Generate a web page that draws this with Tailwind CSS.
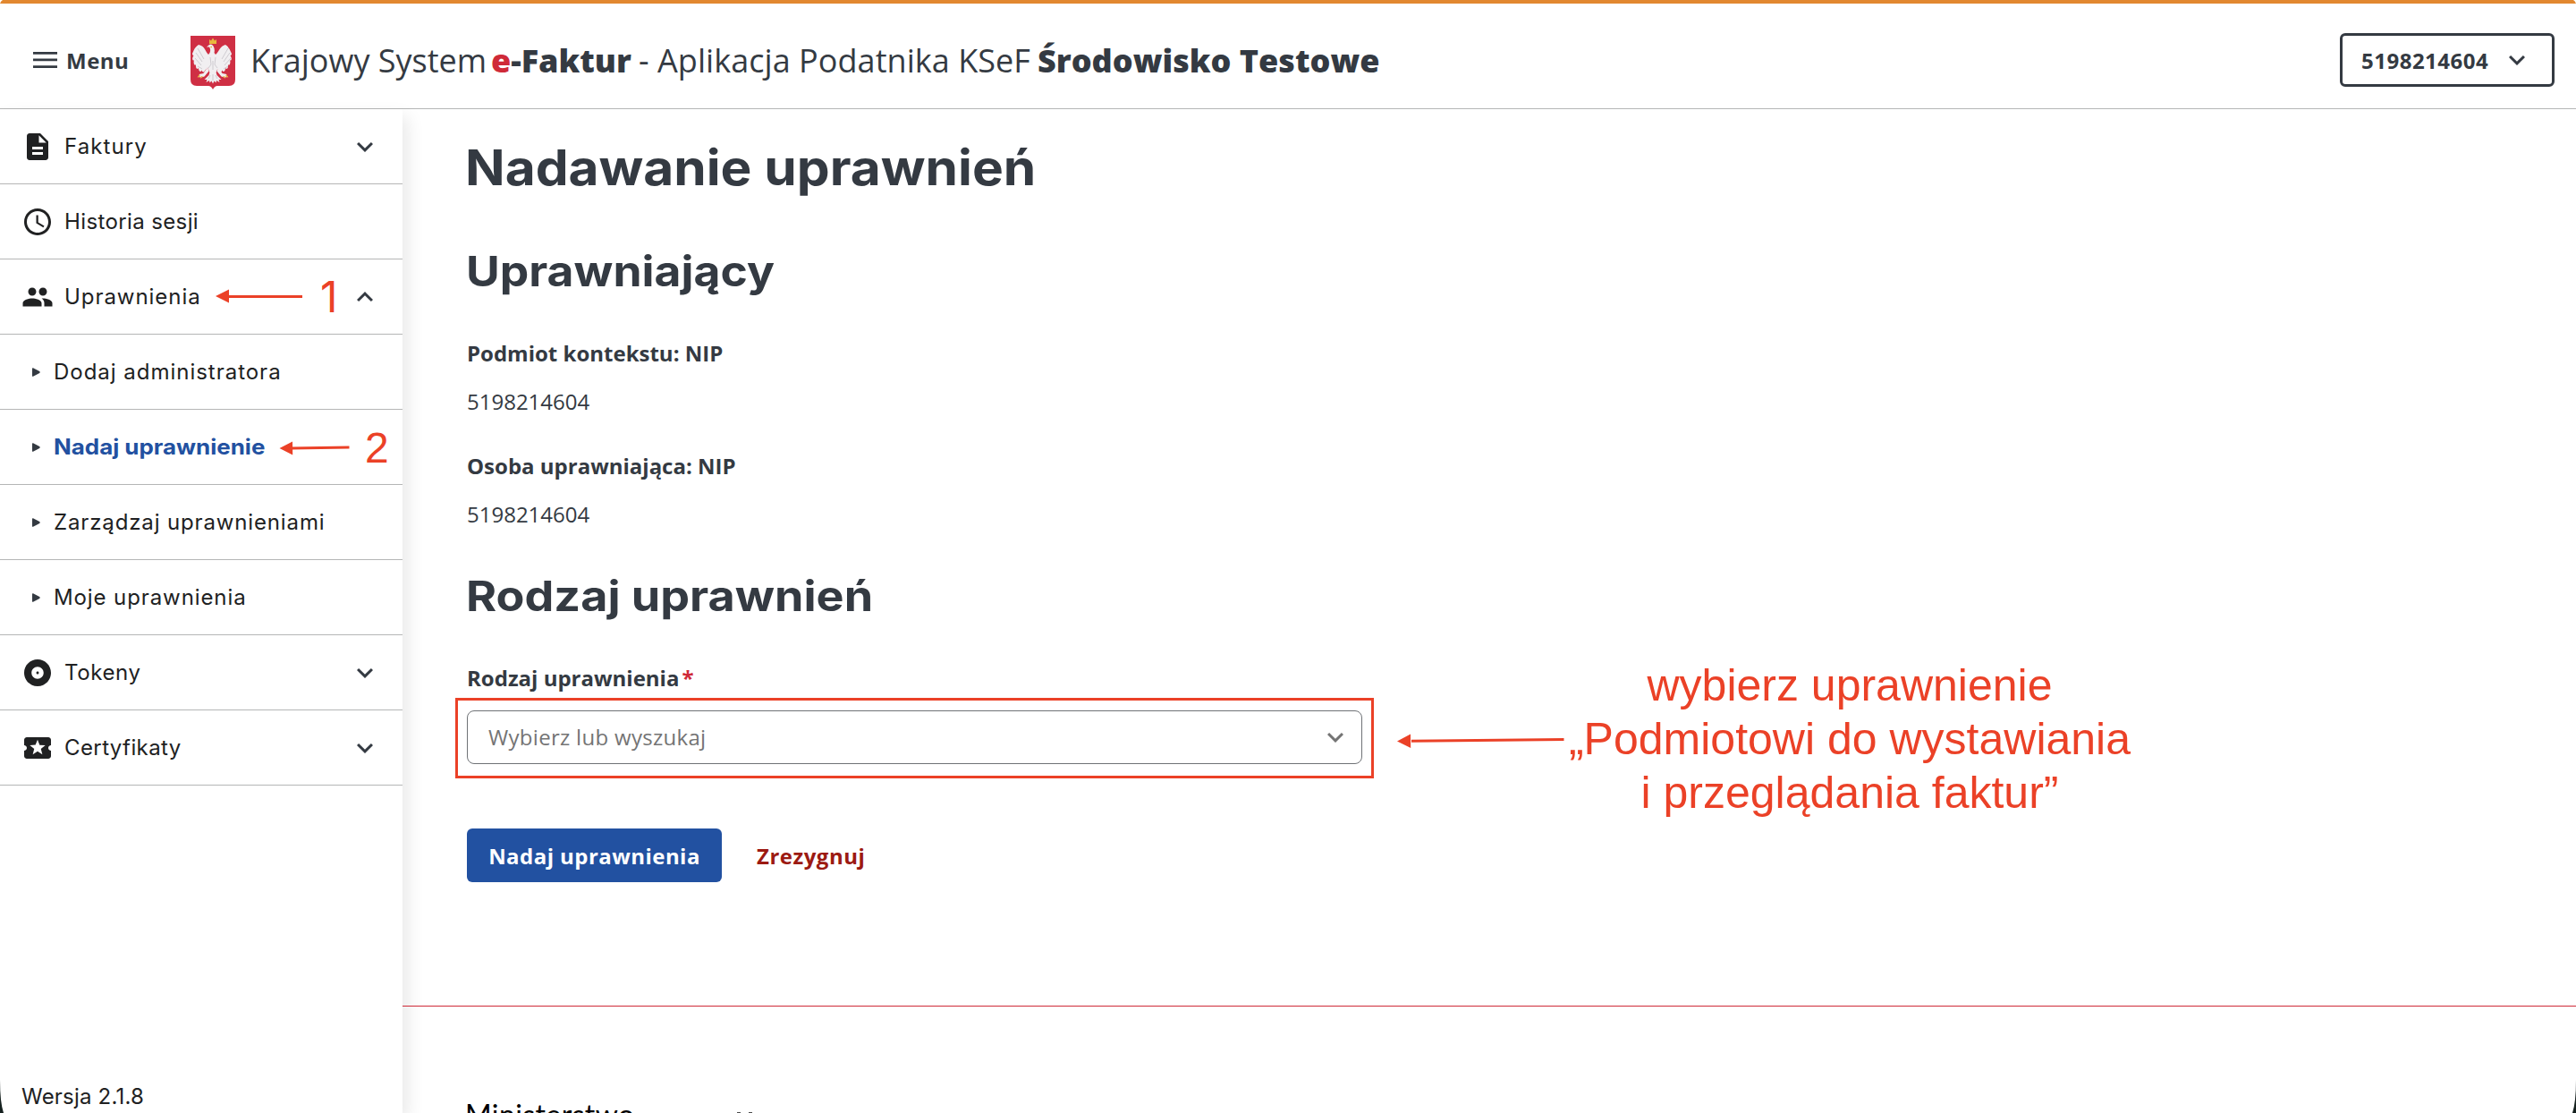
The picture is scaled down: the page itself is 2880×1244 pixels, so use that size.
<!DOCTYPE html>
<html lang="pl">
<head>
  <meta charset="UTF-8">
  <title>Krajowy System e-Faktur - Aplikacja Podatnika KSeF</title>
  <script src="https://cdn.jsdelivr.net/npm/@tailwindcss/browser@4"></script>
</head>

<body class="relative flex flex-col h-[1244px] overflow-hidden bg-white text-[#343a42] text-2xl font-['Open_Sans',sans-serif]">

  <svg class="hidden">
    <symbol id="chevron-down" viewBox="0 0 24 24"><path d="M16.59 8.59 12 13.17 7.41 8.59 6 10l6 6 6-6z"/></symbol>
    <symbol id="chevron-up" viewBox="0 0 24 24"><path d="m12 8-6 6 1.41 1.41L12 10.83l4.59 4.58L18 14z"/></symbol>
    <symbol id="bullet" viewBox="0 0 9 10"><path d="M0 .8Q0 0 1 .2L8.2 4q1 1 0 2L1 9.8Q0 10 0 9.2z"/></symbol>
  </svg>

  <!-- Nagłówek -->
  <header class="flex items-center shrink-0 h-[122px] pt-[9px] pl-[37px] pr-6 border-t-4 border-t-[#e28830] border-b border-b-[#b5b6b6]">
    <button class="flex items-center gap-[10px] w-[176px] font-bold">
      <svg class="w-[27px] h-[18px]" viewBox="0 0 27 18" fill="#343a42"><path d="M0 0h27v2.7H0zM0 7.6h27v2.7H0zM0 15.2h27V18H0z"/></svg>
      <span class="pt-px tracking-[0.5px]">Menu</span>
    </button>

    <!-- Godło -->
    <svg class="w-[50px] h-[60px] mt-1.5 shrink-0" viewBox="0 0 50 60">
      <path fill="#cf2f44" d="M0 0h50v49q0 7-7 7h-13q-3 0-5 4q-2-4-5-4H7q-7 0-7-7z"/>
      <g fill="#f1eff1">
        <path d="M9 10q-4 2-7 10q0 2 1.500 2q-2 3-1 5q1 1 1.500 0q-1 4 .5 5.500q1 .5 1.500-.5q-.5 4 1.500 5q1 0 1.500-1q0 3.500 2 4q1 0 1.300-1.500q1 2.500 2.700 2q2-3 4.500-5.500h9q2.500 2.500 4.500 5.500q1.700.5 2.700-2q.3 1.500 1.300 1.500q2-.5 2-4q.5 1 1.500 1q2-1 1.500-5q.5 1 1.500.5q1.500-1.500.5-5.500q.5 1 1.500 0q1-2-1-5q1.500 0 1.500-2q-3-8-7-10q-4 1-6.500 5q-3 5-4.500 6l-1.500-2q1-4-1-7.500q-2-3-4.500-1.500l-3 2.500l3 0q2 3 .5 6.500l-1.500 2q-2-2-4-6q-2-4-7-5z"/>
        <path d="M19 24h12l1.500 8l-4 9h-7l-4-9z"/>
        <path d="M19 35l-4.500 7l-5 1l1 1.500l-2.500 1.500l4 .500l3.500-1l5-6zM31 35l4.500 7l5 1l-1 1.500l2.500 1.500l-4 .500l-3.500-1l-5-6z"/>
        <path d="M22 39h6l1.500 5l5 5l-3 0l1 3l-3.500-2l-.5 2.500l-2-2l-1.500 3l-1.500-3l-2 2l-.5-2.500l-3.500 2l1-3l-3 0l5-5z"/>
      </g>
      <path fill="none" stroke="#c5c1c8" stroke-width=".8" d="M6 19l7 10M5 25l7 8M8 14l7 12M8 34l5 3M44 19l-7 10M45 25l-7 8M42 14l-7 12M42 34l-5 3M22 24l1 8l-3 4M28 24l-1 8l3 4M25 28v10M22 44l-2 4M28 44l2 4M25 43v7"/>
      <path fill="#e8b93e" d="M21 4l2 1.500L25 2.500l2 3l2-1.500v5h-8zM21.500 12.500l2.500-1v2zM10 43l-2.500 3.500l3-.5zM40 43l2.500 3.500l-3-.5zM12 45l-1 3l3-2.500zM38 45l1 3l-3-2.500z"/>
    </svg>

    <h1 class="flex ml-[17px] pt-0.5 text-4xl leading-[50px] whitespace-nowrap">
      <span class="w-[269px]">Krajowy System</span>
      <span class="w-[165px] font-extrabold"><span class="text-[#cf2a38]">e</span>-Faktur</span>
      <span class="w-[446px] tracking-[0.05px]">- Aplikacja Podatnika KSeF</span>
      <span class="font-extrabold">Środowisko Testowe</span>
    </h1>

    <button class="flex items-center justify-between ml-auto w-[240px] h-[60px] pl-[21px] pr-[21px] border-3 border-[#343a42] rounded-md font-bold tracking-[0.5px]">
      <span class="pt-px">5198214604</span>
      <svg class="size-9" fill="#343a42"><use href="#chevron-down"/></svg>
    </button>
  </header>

  <div class="flex flex-1">

    <!-- Menu boczne -->
    <aside class="flex flex-col w-[450px] shrink-0 text-[#202122] font-['Inter',sans-serif] shadow-[6px_8px_18px_rgba(0,0,0,0.09)]">
      <div class="flex items-center gap-3 h-[84px] px-6 border-b border-[#b5b6b6]">
        <svg class="size-9" viewBox="0 0 24 24" fill="#202122"><path d="M14 2H6c-1.100 0-1.990.9-1.990 2L4 20c0 1.100.89 2 1.990 2H18c1.100 0 2-.9 2-2V8zm2 16H8v-2h8zm0-4H8v-2h8zm-3-5V3.500L18.500 9z"/></svg>
        <span class="tracking-[1.1px]">Faktury</span>
        <svg class="size-9 ml-auto" fill="#343a42"><use href="#chevron-down"/></svg>
      </div>
      <div class="flex items-center gap-3 h-[84px] px-6 border-b border-[#b5b6b6]">
        <svg class="size-9" viewBox="0 0 24 24" fill="#202122"><path d="M11.990 2C6.470 2 2 6.480 2 12s4.470 10 9.990 10C17.520 22 22 17.520 22 12S17.520 2 11.990 2M12 20c-4.420 0-8-3.580-8-8s3.580-8 8-8 8 3.580 8 8-3.580 8-8 8m.5-13H11v6l5.250 3.150.75-1.230-4.500-2.670z"/></svg>
        <span class="tracking-[0.38px]">Historia sesji</span>
      </div>
      <div class="flex items-center gap-3 h-[84px] px-6 border-b border-[#b5b6b6]">
        <svg class="size-9" viewBox="0 0 24 24" fill="#202122"><path d="M16 11c1.660 0 2.990-1.340 2.990-3S17.660 5 16 5s-3 1.340-3 3 1.340 3 3 3m-8 0c1.660 0 2.990-1.340 2.990-3S9.660 5 8 5 5 6.340 5 8s1.340 3 3 3m0 2c-2.330 0-7 1.170-7 3.500V19h14v-2.500c0-2.330-4.670-3.500-7-3.500m8 0c-.29 0-.62.02-.97.05 1.160.84 1.970 1.970 1.970 3.450V19h6v-2.500c0-2.330-4.670-3.500-7-3.500"/></svg>
        <span class="tracking-[0.95px]">Uprawnienia</span>
        <svg class="size-9 ml-auto" fill="#343a42"><use href="#chevron-up"/></svg>
      </div>
      <div class="flex items-center gap-[15px] h-[84px] pl-9 border-b border-[#b5b6b6]">
        <svg class="w-[9px] h-[10px]" fill="#343a42"><use href="#bullet"/></svg>
        <span class="tracking-[0.98px]">Dodaj administratora</span>
      </div>
      <div class="flex items-center gap-[15px] h-[84px] pl-9 border-b border-[#b5b6b6]">
        <svg class="w-[9px] h-[10px]" fill="#343a42"><use href="#bullet"/></svg>
        <span class="font-bold text-[#2251a1] origin-left scale-x-[1.08]">Nadaj uprawnienie</span>
      </div>
      <div class="flex items-center gap-[15px] h-[84px] pl-9 border-b border-[#b5b6b6]">
        <svg class="w-[9px] h-[10px]" fill="#343a42"><use href="#bullet"/></svg>
        <span class="tracking-[0.86px]">Zarządzaj uprawnieniami</span>
      </div>
      <div class="flex items-center gap-[15px] h-[84px] pl-9 border-b border-[#b5b6b6]">
        <svg class="w-[9px] h-[10px]" fill="#343a42"><use href="#bullet"/></svg>
        <span class="tracking-[0.9px]">Moje uprawnienia</span>
      </div>
      <div class="flex items-center gap-3 h-[84px] px-6 border-b border-[#b5b6b6]">
        <svg class="size-9" viewBox="0 0 24 24" fill="#202122"><path d="M12 2C6.480 2 2 6.480 2 12s4.480 10 10 10 10-4.480 10-10S17.520 2 12 2m0 14.500c-2.490 0-4.500-2.010-4.500-4.500S9.510 7.500 12 7.500s4.500 2.010 4.500 4.500-2.010 4.500-4.500 4.500m0-5.500c-.55 0-1 .45-1 1s.45 1 1 1 1-.45 1-1-.45-1-1-1"/></svg>
        <span class="tracking-[0.6px]">Tokeny</span>
        <svg class="size-9 ml-auto" fill="#343a42"><use href="#chevron-down"/></svg>
      </div>
      <div class="flex items-center gap-3 h-[84px] px-6 border-b border-[#b5b6b6]">
        <svg class="size-9" viewBox="0 0 24 24" fill="#202122"><path d="M20 12c0-1.100.9-2 2-2V6c0-1.100-.9-2-2-2H4c-1.100 0-1.990.9-1.990 2v4c1.100 0 1.990.9 1.990 2s-.89 2-2 2v4c0 1.100.9 2 2 2h16c1.100 0 2-.9 2-2v-4c-1.100 0-2-.9-2-2m-4.420 4.800L12 14.500l-3.580 2.300 1.080-4.120-3.290-2.690 4.240-.25L12 5.800l1.540 3.950 4.240.25-3.290 2.690z"/></svg>
        <span class="tracking-[0.4px]">Certyfikaty</span>
        <svg class="size-9 ml-auto" fill="#343a42"><use href="#chevron-down"/></svg>
      </div>
      <p class="mt-auto pl-6 leading-9 tracking-[0.2px]">Wersja 2.1.8</p>
    </aside>

    <!-- Treść -->
    <main class="flex flex-col flex-1 h-[1122px] overflow-hidden">
      <section class="shrink-0 pl-[72px] pt-[35px] h-[1002px]">
        <h2 class="w-fit origin-left scale-x-[1.065] font-['Inter',sans-serif] font-bold text-[55px] leading-[60px] -ml-0.5">Nadawanie uprawnień</h2>
        <h3 class="w-fit origin-left scale-x-[1.098] mt-14 font-['Inter',sans-serif] font-bold text-[47px] leading-[60px] -ml-px">Uprawniający</h3>
        <p class="mt-11 font-bold leading-9">Podmiot kontekstu: NIP</p>
        <p class="mt-[18px] leading-9">5198214604</p>
        <p class="mt-9 font-bold leading-9">Osoba uprawniająca: NIP</p>
        <p class="mt-[18px] leading-9">5198214604</p>
        <h3 class="w-fit origin-left scale-x-[1.108] mt-[43px] font-['Inter',sans-serif] font-bold text-[47px] leading-[60px] -ml-px">Rodzaj uprawnień</h3>
        <label class="block mt-11 font-bold leading-9">Rodzaj uprawnienia<span class="ml-[3px] text-[#cf2a38]">*</span></label>

        <div class="relative flex items-center justify-between mt-[18px] w-[1001px] h-[60px] pl-[23px] pr-[11px] border border-[#6f7276] rounded-lg text-[#747474]">
          <span class="tracking-[0.3px]">Wybierz lub wyszukaj</span>
          <svg class="size-9" fill="#747474"><use href="#chevron-down"/></svg>
          <!-- Ramka wyróżniająca pole -->
          <div class="absolute -left-[14px] -right-[14px] -top-[15px] -bottom-[17px] border-3 border-[#eb4127]"></div>
        </div>

        <div class="flex items-center mt-[72px] gap-[39px] font-bold">
          <button class="w-[285px] h-[60px] pt-px rounded-md bg-[#2251a1] text-white tracking-[0.45px]">Nadaj uprawnienia</button>
          <button class="pt-px text-[#9c1a12] tracking-[0.5px]">Zrezygnuj</button>
        </div>
      </section>

      <footer class="flex shrink-0 border-t border-[#cf2a38] pl-[70px] pt-[101px] text-black">
        <span class="w-[304px] font-['Lato',sans-serif] text-[32px] leading-10 tracking-[0.4px]">Ministerstwo</span>
        <div class="flex gap-[9px] pt-[17px]">
          <i class="w-1 h-2 bg-black/70"></i>
          <i class="w-1 h-2 bg-black/70"></i>
        </div>
      </footer>
    </main>
  </div>

  <!-- Adnotacje -->
  <svg class="absolute inset-0 w-[2880px] h-[1244px] pointer-events-none" fill="#eb4127" stroke="#eb4127">
    <path stroke-width="3" d="M255 331.500H338M326 501L390.500 500M1578 828.200L1748.500 826.500"/>
    <path stroke="none" d="M241 331l15-7.500v15zM312.500 501l14.500-7.500l.2 15zM1562 828.500l15-8l.2 15.500z"/>
    <path stroke="none" fill="#16211f" d="M0 1207Q0 1232 4 1244H0zM2880 1207Q2880 1232 2876 1244H2880z"/>
    <path stroke="none" fill="#fff" d="M0 0h3Q1 1 0 4zM2880 0h-3Q2879 1 2880 4z"/>
  </svg>
  <div class="absolute left-[358px] top-[302px] text-[48px] leading-[60px] text-[#eb4127] font-['Inter',sans-serif]">1</div>
  <div class="absolute left-[408px] top-[471px] text-[48px] leading-[60px] text-[#eb4127] font-['Liberation_Sans',sans-serif]">2</div>
  <div class="absolute left-[1748px] top-[736px] w-[640px] text-center text-[50px] leading-[60px] text-[#eb4127] font-['Liberation_Sans',sans-serif]">
    wybierz uprawnienie<br>„Podmiotowi do wystawiania<br>i przeglądania faktur”
  </div>

</body>
</html>
